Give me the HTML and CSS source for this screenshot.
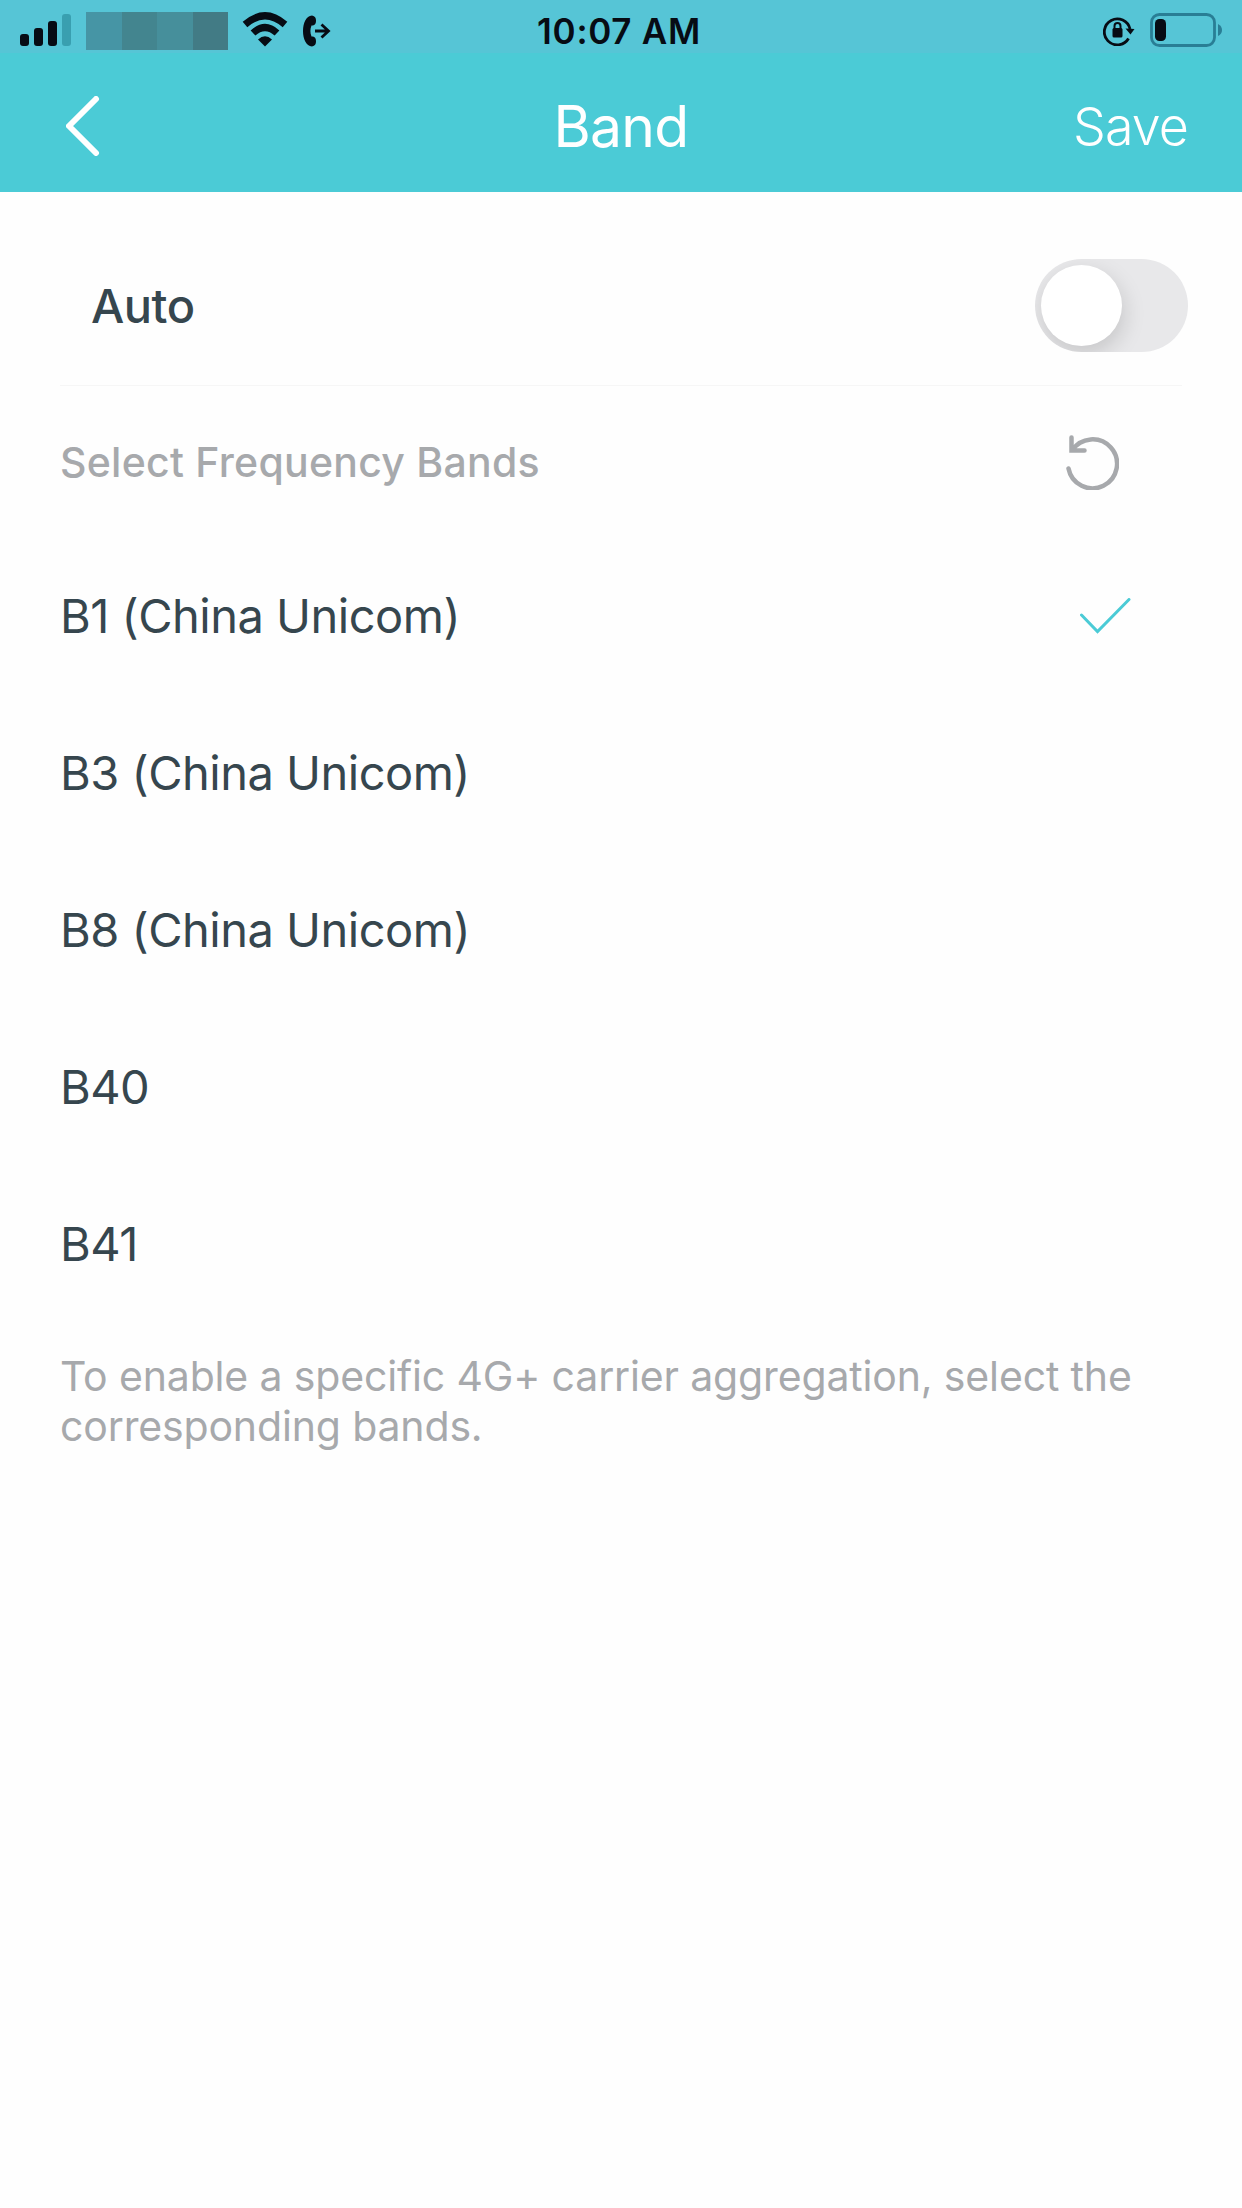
FILE: index.html
```
<!DOCTYPE html>
<html lang="en">
<head>
  <meta charset="UTF-8" />
  <title>Band</title>
  <link rel="stylesheet" href="styles.css">
</head>
<body>

  <!-- Status bar -->
  <div class="status-bar">
    <div class="status-left">
      <svg class="signal" width="52" height="33" viewBox="0 0 52 33">
        <rect x="0" y="20" width="9" height="12" rx="3" />
        <rect x="14" y="14" width="9" height="18" rx="3" />
        <rect x="28" y="7" width="9" height="25" rx="3" />
        <rect class="dim" x="42" y="0" width="9" height="32" rx="3" />
      </svg>
      <div class="carrier"><i></i><i></i><i></i><i></i></div>
      <svg class="wifi" width="46" height="35" viewBox="0 0 46 35">
        <path class="arc" d="M3 12.500 Q23 -5 43 12.500 M11 21 Q23 10 35 21" />
        <path d="M16 27.500 Q23 21 30 27.500 L23 34.500 Z" />
      </svg>
      <svg class="call" width="28" height="32" viewBox="0 0 28 32">
        <path d="M9 0.500 C3 1 0 8 0 16 C0 24 3 31 9 31.500 C12 31 13 29 13 26.500 C13 23 12 21.500 8.500 21.500 C7 18 7 14 8.500 10.500 C12 10.500 13 9 13 5.500 C13 3 12 1 9 0.500 Z" />
        <path class="arrow" d="M12 16 H25 M18.500 9.500 L25.500 16 L18.500 22.500" />
      </svg>
    </div>
    <div class="time">10:07 AM</div>
    <div class="status-right">
      <svg class="lock" width="32" height="30" viewBox="0 0 32 30">
        <path class="ring" d="M25.500 22.500 A13 13 0 1 1 27 13" />
        <path d="M22.500 12.500 L31.500 13 L27.500 18.500 Z" />
        <rect x="9.500" y="12" width="10" height="9.500" rx="1.500" />
        <path class="shackle" d="M11.500 13 V10 A3 3 0 0 1 17.500 10 V13" />
      </svg>
      <svg class="battery" width="73" height="35" viewBox="0 0 73 35">
        <rect class="shell" x="1.500" y="1.500" width="63" height="31" rx="8" />
        <rect x="5" y="6" width="11" height="22" rx="4.500" />
        <path class="tip" d="M68 11 Q72 13 72 17 Q72 21 68 23 Z" />
      </svg>
    </div>
  </div>

  <!-- Navigation -->
  <header>
    <svg class="back" width="34" height="60" viewBox="0 0 34 60">
      <path d="M30 3 L3 30 L30 57" />
    </svg>
    <h1>Band</h1>
    <span class="save">Save</span>
  </header>

  <main>
    <div class="auto">
      <span>Auto</span>
      <div class="toggle"></div>
    </div>

    <div class="section">
      <h2>Select Frequency Bands</h2>
      <svg class="reset" width="53" height="55" viewBox="0 0 53 55">
        <path d="M2.500 33.500 A24.500 24.500 0 1 0 6 15.500 M5.500 2.500 V15.500 H18.500" />
      </svg>
    </div>

    <ul>
      <li class="selected">B1 (China Unicom)
        <svg width="52" height="36" viewBox="0 0 52 36">
          <path d="M1.500 17 L17.500 33.500 L49 1.500" />
        </svg>
      </li>
      <li>B3 (China Unicom)</li>
      <li>B8 (China Unicom)</li>
      <li>B40</li>
      <li>B41</li>
    </ul>

    <p class="note">To enable a specific 4G+ carrier aggregation, select the<br>corresponding bands.</p>
  </main>

</body>
</html>
```
FILE: styles.css
```
:root {
  --bar: #4bcbd6;
  --status: #56c5d6;
  --bg: #fefefe;
  --text: #36464e;
  --muted: #a7a9ac;
  --ink: #070c14;
}

* {
  box-sizing: border-box;
}

body {
  margin: 0;
  min-height: 2208px;
  font-family: Inter, 'Liberation Sans', sans-serif;
  background: var(--bg);
  color: var(--text);
}

svg {
  display: block;
  flex: none;
}

.status-bar {
  display: grid;
  grid-template-columns: 1fr auto 1fr;
  height: 53px;
  background: var(--status);
  color: var(--ink);
  fill: var(--ink);
}

.status-left {
  display: flex;
  align-items: flex-start;
  padding-left: 20px;
}

.signal {
  margin-top: 14px;
}

.signal .dim {
  fill: #399fb0;
}

.carrier {
  display: flex;
  width: 142px;
  height: 38px;
  margin: 12px 14px 0;
}

.carrier i {
  flex: 1;
  background: #4695a5;
}

.carrier i:nth-child(2) {
  background: #43858f;
}

.carrier i:nth-child(3) {
  background: #468f9b;
}

.carrier i:nth-child(4) {
  background: #427b85;
}

.wifi {
  margin-top: 12px;
}

.arc {
  fill: none;
  stroke: var(--ink);
  stroke-width: 7;
}

.call {
  margin: 15px 0 0 15px;
}

.arrow {
  fill: none;
  stroke: var(--ink);
  stroke-width: 2.8;
}

.time {
  font-size: 35px;
  line-height: 63px;
  font-weight: 600;
  letter-spacing: 0.7px;
  padding-right: 4px;
}

.status-right {
  display: flex;
  justify-content: flex-end;
  padding-right: 19px;
}

.lock {
  margin: 16px 15px 0 0;
}

.ring {
  fill: none;
  stroke: var(--ink);
  stroke-width: 2.8;
}

.shackle {
  fill: none;
  stroke: var(--ink);
  stroke-width: 2;
}

.battery {
  margin-top: 13px;
}

.shell {
  fill: none;
  stroke: #297e95;
  stroke-width: 2.8;
}

.tip {
  fill: #297e95;
}

header {
  display: grid;
  grid-template-columns: 1fr auto 1fr;
  height: 139px;
  background: var(--bar);
  color: #fff;
}

.back {
  margin: 43px 0 0 66px;
}

.back path {
  fill: none;
  stroke: #fff;
  stroke-width: 6;
  stroke-linecap: round;
  stroke-linejoin: round;
}

h1 {
  margin: 0;
  font-size: 57px;
  line-height: 148px;
  font-weight: 400;
  letter-spacing: -0.7px;
}

.save {
  justify-self: end;
  padding-right: 54px;
  font-size: 52px;
  line-height: 148px;
  font-weight: 300;
  letter-spacing: -0.9px;
}

.auto {
  display: flex;
  align-items: flex-start;
  justify-content: space-between;
  height: 194px;
  margin: 0 60px;
  padding: 67px 0 0 31px;
  border-bottom: 1px solid #f6f6f6;
  font-size: 47px;
  line-height: 94px;
  font-weight: 500;
  letter-spacing: -0.5px;
}

.toggle {
  width: 153px;
  height: 93px;
  margin-right: -6px;
  padding: 6px;
  border-radius: 47px;
  background: #e8e8ea;
  overflow: hidden;
}

.toggle::before {
  content: '';
  display: block;
  width: 81px;
  height: 81px;
  border-radius: 50%;
  background: #fff;
  box-shadow: 2px 8px 22px rgba(0, 0, 0, 0.15);
}

.section {
  display: flex;
  align-items: center;
  justify-content: space-between;
  height: 152px;
  padding: 0 123px 0 60px;
  color: var(--muted);
}

h2 {
  margin: 0;
  font-size: 41px;
  font-weight: 500;
  letter-spacing: 0.26px;
}

.reset path {
  fill: none;
  stroke: var(--muted);
  stroke-width: 4.5;
  stroke-linecap: round;
}

ul {
  margin: -1px 0 0;
  padding: 0;
  list-style: none;
}

li {
  display: flex;
  align-items: center;
  justify-content: space-between;
  height: 157px;
  padding: 0 110px 0 60px;
  font-size: 47px;
  letter-spacing: -0.5px;
}

li path {
  fill: none;
  stroke: var(--bar);
  stroke-width: 3;
  stroke-linecap: round;
}

.note {
  margin: 29px 60px 0;
  color: var(--muted);
  font-size: 41px;
  line-height: 50px;
  letter-spacing: -0.15px;
  white-space: nowrap;
}
```
